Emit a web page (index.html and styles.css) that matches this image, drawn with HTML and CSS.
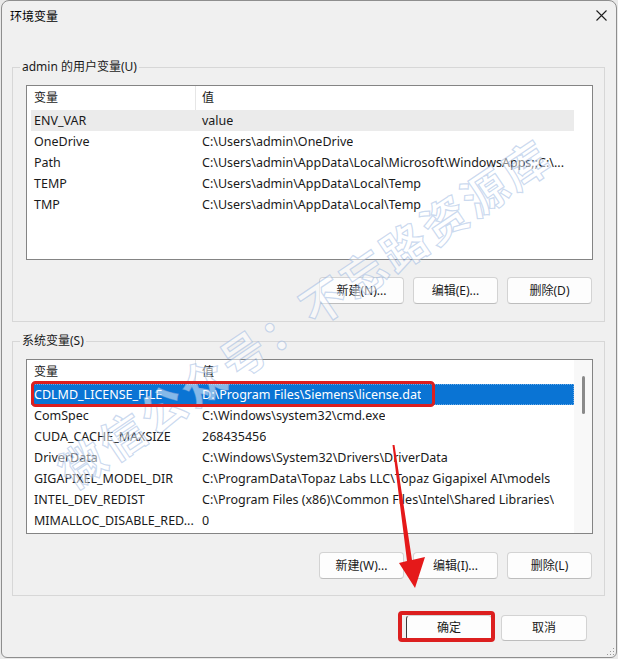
FILE: index.html
```html
<!DOCTYPE html>
<html lang="zh-CN">
<head>
<meta charset="utf-8">
<title>环境变量</title>
<link rel="stylesheet" href="styles.css">
</head>
<body>
<div class="window">
  <div class="titlebar">
    <span class="title">环境变量</span>
    <svg class="close" width="11" height="11" viewBox="0 0 11 11"><path d="M0.5 0.5 L10.5 10.5 M10.5 0.5 L0.5 10.5" stroke="#1e1e1e" stroke-width="1.1" fill="none"/></svg>
  </div>

  <section class="group group-user">
    <div class="legend">admin 的用户变量(U)</div>
    <div class="list">
      <div class="list-body">
        <div class="row head"><span class="c1">变量</span><span class="c2">值</span></div>
        <div class="row hover"><span class="c1">ENV_VAR</span><span class="c2">value</span></div>
        <div class="row"><span class="c1">OneDrive</span><span class="c2">C:\Users\admin\OneDrive</span></div>
        <div class="row"><span class="c1">Path</span><span class="c2">C:\Users\admin\AppData\Local\Microsoft\WindowsApps;;C:\...</span></div>
        <div class="row"><span class="c1">TEMP</span><span class="c2">C:\Users\admin\AppData\Local\Temp</span></div>
        <div class="row"><span class="c1">TMP</span><span class="c2">C:\Users\admin\AppData\Local\Temp</span></div>
      </div>
      <div class="scroll"></div>
    </div>
    <div class="btns">
      <button class="btn">新建(N)...</button>
      <button class="btn">编辑(E)...</button>
      <button class="btn">删除(D)</button>
    </div>
  </section>

  <section class="group group-sys">
    <div class="legend">系统变量(S)</div>
    <div class="list">
      <div class="list-body">
        <div class="row head"><span class="c1">变量</span><span class="c2">值</span></div>
        <div class="row selected"><span class="c1">CDLMD_LICENSE_FILE</span><span class="c2">D:\Program Files\Siemens\license.dat</span></div>
        <div class="row"><span class="c1">ComSpec</span><span class="c2">C:\Windows\system32\cmd.exe</span></div>
        <div class="row"><span class="c1">CUDA_CACHE_MAXSIZE</span><span class="c2">268435456</span></div>
        <div class="row"><span class="c1">DriverData</span><span class="c2">C:\Windows\System32\Drivers\DriverData</span></div>
        <div class="row"><span class="c1">GIGAPIXEL_MODEL_DIR</span><span class="c2">C:\ProgramData\Topaz Labs LLC\Topaz Gigapixel AI\models</span></div>
        <div class="row"><span class="c1">INTEL_DEV_REDIST</span><span class="c2">C:\Program Files (x86)\Common Files\Intel\Shared Libraries\</span></div>
        <div class="row"><span class="c1">MIMALLOC_DISABLE_RED...</span><span class="c2">0</span></div>
      </div>
      <div class="scroll scroll-on"><div class="thumb"></div></div>
    </div>
    <div class="btns">
      <button class="btn">新建(W)...</button>
      <button class="btn">编辑(I)...</button>
      <button class="btn">删除(L)</button>
    </div>
  </section>

  <div class="footer">
    <button class="btn btn-foot btn-default">确定</button>
    <button class="btn btn-foot">取消</button>
  </div>

  <svg class="grip" width="8" height="8" viewBox="0 0 8 8">
    <rect x="6" y="0" width="1" height="1" fill="#999"/>
    <rect x="3" y="3" width="1" height="1" fill="#999"/>
    <rect x="6" y="3" width="1" height="1" fill="#999"/>
    <rect x="0" y="6" width="1" height="1" fill="#999"/>
    <rect x="3" y="6" width="1" height="1" fill="#999"/>
    <rect x="6" y="6" width="1" height="1" fill="#999"/>
  </svg>
</div>

<div class="watermark">微信公众号：不忘路资源库</div>

<svg class="annot" width="618" height="659" viewBox="0 0 618 659">
  <rect x="32.5" y="382.5" width="401" height="23" rx="3" fill="none" stroke="#dc1f1f" stroke-width="3"/>
  <rect x="400" y="613" width="93" height="27" rx="2" fill="none" stroke="#dc1f1f" stroke-width="4"/>
  <polygon points="392.5,445 394.5,445 412,560 425,557 415,588 399,563 407,561" fill="#e5191a"/>
</svg>
</body>
</html>
```

FILE: styles.css
```css
* { box-sizing: border-box; }

html, body {
  margin: 0;
  padding: 0;
}

body {
  width: 618px;
  height: 659px;
  background: #e9e9e9;
  font-family: "Noto Sans", "Noto Sans CJK SC", sans-serif;
  font-size: 12px;
  color: #111;
  position: relative;
  overflow: hidden;
}

.window {
  margin-left: 1px;
  width: 616px;
  height: 658px;
  border: 1px solid #8e8e8e;
  border-radius: 8px 8px 6px 6px;
  background: #f0f0f0;
  display: flex;
  flex-direction: column;
  position: relative;
  overflow: hidden;
}

.titlebar {
  height: 29px;
  display: flex;
  align-items: center;
  justify-content: space-between;
  padding: 0 9px 0 8px;
  flex-shrink: 0;
}

.title {
  font-family: "Noto Sans CJK SC", sans-serif;
  font-size: 12px;
  line-height: 16px;
  color: #000;
}

.close { display: block; }

.group {
  margin-left: 10px;
  width: 593px;
  border: 1px solid #d7d7d7;
  display: flex;
  flex-direction: column;
  flex-shrink: 0;
}

.group-user { margin-top: 37px; padding-bottom: 17px; }
.group-sys { margin-top: 19px; padding-bottom: 16px; }

.legend {
  align-self: flex-start;
  margin: -9px 0 0 7px;
  padding: 0 2px;
  line-height: 16px;
  height: 16px;
  background: #f0f0f0;
  color: #1a1a1a;
  font-family: "Noto Sans", "Noto Sans CJK SC", sans-serif;
}

.list {
  margin: 10px 0 0 13px;
  width: 567px;
  height: 175px;
  border: 1px solid #848484;
  background: #fff;
  display: flex;
  overflow: hidden;
}

.list-body {
  flex: 1;
  padding-left: 4px;
  display: flex;
  flex-direction: column;
  min-width: 0;
}

.row {
  display: flex;
  height: 21px;
  line-height: 21px;
  font-size: 12.5px;
  flex-shrink: 0;
  white-space: nowrap;
  color: #1a1a1a;
}

.row .c1 {
  width: 165px;
  padding-left: 3px;
  flex-shrink: 0;
  overflow: hidden;
}

.row .c2 {
  padding-left: 6px;
  overflow: hidden;
}

.row.head {
  height: 24px;
  line-height: 23px;
  font-size: 12px;
}

.row.head .c1 {
  border-right: 1px solid #e6e6e6;
}

.row.hover { background: #ebebeb; }

.row.selected {
  background: #0a74d4;
  color: #fff;
  outline: 1px dotted #6aaae6;
  outline-offset: -1px;
}

.scroll {
  width: 18px;
  flex-shrink: 0;
  background: #fff;
}

.scroll-on {
  background: #f8f8f8;
  padding-top: 16px;
}

.thumb {
  margin-left: 8px;
  width: 3px;
  height: 38px;
  border-radius: 2px;
  background: #8a8a8a;
}

.btns {
  display: flex;
  justify-content: flex-end;
  gap: 9px;
  margin: 17px 12px 0 0;
}

.group-sys .btns { margin-top: 18px; }

.btn {
  width: 85px;
  height: 27px;
  padding: 0;
  border: 1px solid #d3d3d3;
  border-bottom-color: #bdbdbd;
  border-radius: 4px;
  background: #fdfdfd;
  font-family: "Noto Sans", "Noto Sans CJK SC", sans-serif;
  font-size: 12px;
  color: #1a1a1a;
  line-height: 24px;
  text-align: center;
}

.footer {
  display: flex;
  justify-content: flex-end;
  gap: 9px;
  margin-top: 19px;
  padding-right: 29px;
}

.btn-foot {
  width: 86px;
  height: 26px;
}

.btn-default {
  border-left: 1px solid #3a3a3a;
}

.grip {
  position: absolute;
  right: 1px;
  bottom: 1px;
}

.watermark {
  position: absolute;
  left: 4px;
  top: 286px;
  width: 600px;
  height: 52px;
  line-height: 52px;
  text-align: center;
  font-family: "Noto Sans CJK SC", sans-serif;
  font-weight: 700;
  font-size: 45px;
  letter-spacing: 3.5px;
  color: rgba(255, 255, 255, 0.5);
  -webkit-text-stroke: 1.2px rgba(140, 172, 220, 0.45);
  transform: rotate(-34deg);
  pointer-events: none;
  white-space: nowrap;
}

.annot {
  position: absolute;
  left: 0;
  top: 0;
  pointer-events: none;
}
```
